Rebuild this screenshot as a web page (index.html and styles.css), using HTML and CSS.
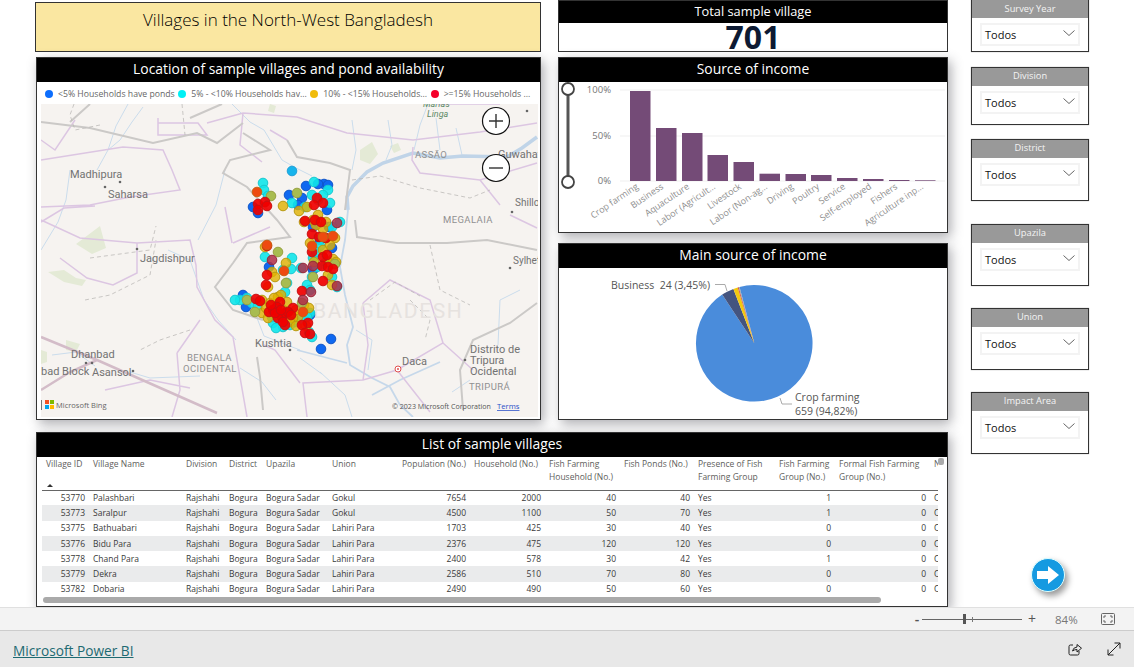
FILE: index.html
```html
<!DOCTYPE html>
<html lang="en">
<head>
<meta charset="utf-8">
<title>Villages in the North-West Bangladesh</title>
<link rel="stylesheet" href="styles.css">
</head>
<body>
<div class="page">
  <main class="canvas">
    <div class="report">
      <div class="top">
        <section class="col-left">
          <div class="title-card">Villages in the North-West Bangladesh</div>
          <div class="card map-card">
            <h2 class="card-head">Location of sample villages and pond availability</h2>
            <div class="legend">
              <span class="leg"><i class="dot dot-blue"></i>&lt;5% Households have ponds</span>
              <span class="leg"><i class="dot dot-cyan"></i>5% - &lt;10% Households hav...</span>
              <span class="leg"><i class="dot dot-yellow"></i>10% - &lt;15% Households...</span>
              <span class="leg"><i class="dot dot-red"></i>&gt;=15% Households ...</span>
            </div>
            <svg class="map" viewBox="41 104 497 313" width="497" height="313">
              <rect x="41" y="104" width="497" height="313" fill="#f6f3f0"/>
              <g class="terrain">
                <path class="green" d="M270 104l6 2-2 7-6-2zM360 150l12-8 6 12-8 10-10-4zM390 146l8-3 3 7-7 3zM76 244l24-18 6 22-14 6zM48 272l16-2 12 8 10 2-4 6-18-4zM41 350l6 2v10l-6 2zM66 340l14 4-4 8-10-2z"/>
                <path class="river" d="M97 170L108 150L120 140L132 122L143 107M128 104L116 126L108 150M232 104L250 122L264 130L282 160L296 168L312 176M352 120L356 150L352 170M388 120L392 145L386 160M414 150L420 125L428 104M70 170L66 200L58 222L41 250M168 250L190 260L204 300L218 320L236 340M225 170L216 205L198 240M52 355L76 352L95 366M130 372L150 378L200 376M250 300L264 336L300 350M240 368L262 382L276 400M436 118L440 150M456 128L462 155M356 330L372 340L368 370M320 372L345 395L352 417M300 358L322 374M452 392L470 380M498 345L500 300L520 290"/>
                <path class="river-wide" d="M348 210L347 197L353 186L367 172L383 163L413 153L440 158L463 156L507 157L522 148L537 137"/>
                <path class="river-mid" d="M348 210L345 240L340 267L345 295L353 327L347 345L350 365L372 378L390 387L400 405L413 417M297 350L320 356L347 363M372 395L400 380L440 362"/>
                <path class="road" d="M41 160L123 147L163 150L172 170L180 190L130 197L90 205L41 207M158 118V135H207L198 123H158M207 123L243 113L297 117L347 133L413 140L480 132L537 123M413 147L412 160L420 173L480 180L537 163M41 220L80 238L137 243L190 240L196 265L197 287L215 320L233 337L247 417M137 243V273L113 285L87 278L60 258M233 243L270 227M363 303L390 280L430 300L443 343L397 370L363 380L303 383L307 417M177 353L200 320M177 353L180 390L172 417M75 120L55 150L41 140M243 113L240 145L262 162M437 104L500 104M225 207L232 243M105 390L150 380L190 388M443 343L473 370M397 370L430 412M287 140L270 130M41 222L64 208L95 206M300 383L275 350L264 345M480 180L500 205M537 228L510 215M363 303L368 345L363 380"/>
                <path class="road-main" d="M41 337L97 360L217 413M41 390L70 372L97 360"/>
                <path class="border" d="M41 122L90 128L153 143L197 133L217 143L243 123M243 133L270 150L230 160L223 173L247 187L277 220L290 237L247 243L233 263L215 287L233 310L263 320M287 140L297 157L330 163L350 170L345 210M355 220L357 237L397 243L447 243L487 240L537 250M257 357L260 377L263 410M537 303L510 323L473 340L460 370L463 410M90 104L70 122M222 104L190 118"/>
                <path class="dashed" d="M74 104L70 115L75 130L100 125M182 104L185 135M90 258L150 250L156 226M85 300L110 295L150 275L156 240M190 330L160 340L140 350M370 300L395 282L420 296M410 300L430 320L425 340M430 245L440 290L470 305M352 180L380 176L420 188L470 198L490 190"/>
              </g>
              <g class="labels">
                <text class="lbl-green" x="423" y="107">Marias</text>
                <text class="lbl-green" x="427" y="117">Linga</text>
                <text class="lbl-cap" x="415" y="158">ASSÃO</text>
                <text x="498" y="158">Guwahati</text>
                <text class="lbl-sm" x="515" y="206">Shillong</text>
                <text class="lbl-cap" x="443" y="223">MEGALAIA</text>
                <text class="lbl-sm" x="513" y="264">Sylhet</text>
                <text x="70" y="178">Madhipura</text>
                <text x="108" y="198">Saharsa</text>
                <text x="140" y="262">Jagdishpur</text>
                <text class="lbl-bd" x="313" y="318">BANGLADESH</text>
                <text x="255" y="347">Kushtia</text>
                <text x="71" y="358">Dhanbad</text>
                <text class="lbl-cap" x="187" y="361">BENGALA</text>
                <text class="lbl-cap" x="183" y="372">OCIDENTAL</text>
                <text x="41" y="375">bad Block</text>
                <text x="92" y="376">Asansol</text>
                <text x="402" y="365">Daca</text>
                <text x="470" y="353">Distrito de</text>
                <text x="470" y="364">Tripura</text>
                <text x="470" y="375">Ocidental</text>
                <text class="lbl-cap" x="469" y="390">TRIPURÁ</text>
              </g>
              <g class="towns">
                <circle cx="105" cy="187" r="1.3"/><circle cx="120" cy="182" r="1.3"/><circle cx="137" cy="249" r="1.3"/>
                <circle cx="510" cy="268" r="1.3"/><circle cx="290" cy="350" r="1.3"/><circle cx="86" cy="363" r="1.3"/>
                <circle cx="92" cy="363" r="1.3"/><circle cx="133" cy="371" r="1.3"/><circle cx="465" cy="360" r="1.3"/>
                <circle cx="527" cy="111" r="1.3"/><circle cx="512" cy="212" r="1.3"/>
              </g>
              <circle class="capital" cx="398" cy="369" r="3"/><circle class="capital-in" cx="398" cy="369" r="1"/>
              <g class="dots dots-blue">
                <circle cx="258" cy="213"/><circle cx="253" cy="207"/><circle cx="306" cy="186"/><circle cx="324" cy="184"/><circle cx="328" cy="185"/><circle cx="289" cy="195"/><circle cx="302" cy="198"/><circle cx="327" cy="210"/><circle cx="332" cy="248"/><circle cx="269" cy="267"/><circle cx="243" cy="295"/><circle cx="246" cy="307"/><circle cx="310" cy="315"/><circle cx="331" cy="339"/><circle cx="321" cy="349"/><circle cx="313" cy="270"/><circle cx="329" cy="227"/><circle cx="313" cy="227"/><circle cx="320" cy="240"/><circle cx="298" cy="205"/><circle cx="318" cy="184"/>
              </g>
              <g class="dots dots-sky"><circle cx="292" cy="171"/></g>
              <g class="dots dots-cyan">
                <circle cx="263" cy="183"/><circle cx="264" cy="190"/><circle cx="314" cy="182"/><circle cx="328" cy="190"/><circle cx="323" cy="195"/><circle cx="312" cy="195"/><circle cx="292" cy="203"/><circle cx="305" cy="207"/><circle cx="330" cy="203"/><circle cx="340" cy="222"/><circle cx="313" cy="258"/><circle cx="265" cy="257"/><circle cx="292" cy="258"/><circle cx="291" cy="269"/><circle cx="301" cy="268"/><circle cx="283" cy="270"/><circle cx="285" cy="292"/><circle cx="287" cy="283"/><circle cx="307" cy="285"/><circle cx="310" cy="290"/><circle cx="240" cy="300"/><circle cx="247" cy="298"/><circle cx="273" cy="323"/><circle cx="272" cy="317"/><circle cx="283" cy="327"/><circle cx="312" cy="337"/><circle cx="310" cy="313"/><circle cx="307" cy="317"/><circle cx="332" cy="277"/><circle cx="337" cy="287"/><circle cx="312" cy="277"/><circle cx="317" cy="267"/><circle cx="268" cy="196"/><circle cx="318" cy="200"/><circle cx="300" cy="320"/><circle cx="235" cy="300"/><circle cx="252" cy="303"/><circle cx="258" cy="306"/><circle cx="320" cy="246"/><circle cx="316" cy="252"/><circle cx="326" cy="262"/><circle cx="332" cy="227"/><circle cx="295" cy="322"/><circle cx="309" cy="332"/><circle cx="276" cy="328"/><circle cx="290" cy="325"/>
              </g>
              <g class="dots dots-yellow">
                <circle cx="283" cy="206"/><circle cx="299" cy="211"/><circle cx="307" cy="207"/><circle cx="304" cy="222"/><circle cx="323" cy="229"/><circle cx="335" cy="238"/><circle cx="310" cy="243"/><circle cx="323" cy="250"/><circle cx="333" cy="259"/><circle cx="265" cy="247"/><circle cx="286" cy="263"/><circle cx="272" cy="272"/><circle cx="275" cy="277"/><circle cx="268" cy="287"/><circle cx="332" cy="285"/><circle cx="262" cy="313"/><circle cx="278" cy="297"/><circle cx="270" cy="303"/><circle cx="287" cy="302"/><circle cx="298" cy="317"/><circle cx="293" cy="318"/><circle cx="316" cy="225"/><circle cx="328" cy="262"/><circle cx="336" cy="262"/><circle cx="276" cy="315"/><circle cx="306" cy="326"/><circle cx="283" cy="310"/><circle cx="326" cy="222"/><circle cx="318" cy="215"/><circle cx="330" cy="245"/><circle cx="314" cy="262"/><circle cx="328" cy="275"/><circle cx="268" cy="318"/><circle cx="290" cy="322"/><circle cx="296" cy="310"/><circle cx="304" cy="305"/><circle cx="309" cy="308"/><circle cx="296" cy="326"/><circle cx="313" cy="220"/><circle cx="262" cy="300"/><circle cx="281" cy="295"/><circle cx="274" cy="298"/><circle cx="266" cy="308"/>
              </g>
              <g class="dots dots-olive">
                <circle cx="271" cy="196"/><circle cx="297" cy="193"/><circle cx="278" cy="252"/><circle cx="286" cy="283"/><circle cx="255" cy="312"/><circle cx="302" cy="303"/><circle cx="313" cy="277"/><circle cx="247" cy="300"/><circle cx="335" cy="264"/>
              </g>
              <g class="dots dots-red">
                <circle cx="258" cy="204"/><circle cx="265" cy="202"/><circle cx="267" cy="206"/><circle cx="258" cy="210"/><circle cx="317" cy="198"/><circle cx="314" cy="205"/><circle cx="323" cy="203"/><circle cx="305" cy="221"/><circle cx="315" cy="220"/><circle cx="321" cy="222"/><circle cx="312" cy="234"/><circle cx="319" cy="237"/><circle cx="326" cy="238"/><circle cx="312" cy="252"/><circle cx="323" cy="257"/><circle cx="327" cy="255"/><circle cx="267" cy="246"/><circle cx="322" cy="266"/><circle cx="328" cy="267"/><circle cx="333" cy="269"/><circle cx="267" cy="275"/><circle cx="266" cy="285"/><circle cx="323" cy="281"/><circle cx="302" cy="291"/><circle cx="256" cy="299"/><circle cx="260" cy="301"/><circle cx="293" cy="308"/><circle cx="280" cy="302"/><circle cx="277" cy="307"/><circle cx="273" cy="310"/><circle cx="269" cy="312"/><circle cx="282" cy="317"/><circle cx="285" cy="313"/><circle cx="278" cy="318"/><circle cx="285" cy="325"/><circle cx="308" cy="323"/><circle cx="302" cy="325"/><circle cx="305" cy="333"/><circle cx="310" cy="334"/><circle cx="288" cy="312"/><circle cx="275" cy="313"/><circle cx="291" cy="315"/><circle cx="281" cy="310"/><circle cx="271" cy="305"/><circle cx="283" cy="322"/>
              </g>
              <g class="dots dots-orange">
                <circle cx="333" cy="236"/><circle cx="312" cy="246"/><circle cx="284" cy="271"/><circle cx="303" cy="312"/><circle cx="267" cy="245"/><circle cx="323" cy="237"/><circle cx="257" cy="192"/>
              </g>
              <g class="dots dots-crimson">
                <circle cx="337" cy="223"/><circle cx="313" cy="266"/><circle cx="303" cy="268"/><circle cx="337" cy="286"/><circle cx="311" cy="292"/><circle cx="303" cy="300"/><circle cx="272" cy="260"/>
              </g>
              <g class="bing">
                <rect x="41" y="400" width="1" height="10" fill="#777"/>
                <rect x="45" y="400" width="4" height="4" fill="#f25022"/><rect x="50" y="400" width="4" height="4" fill="#7fba00"/>
                <rect x="45" y="405" width="4" height="4" fill="#00a4ef"/><rect x="50" y="405" width="4" height="4" fill="#ffb900"/>
                <text class="bing-text" x="56" y="407.5">Microsoft Bing</text>
                <text class="copy" x="392" y="409">© 2023 Microsoft Corporation</text>
                <text class="terms" x="497" y="409">Terms</text>
              </g>
              <g class="zoom-btn">
                <circle cx="496" cy="121" r="13.5"/><path d="M489 121H503M496 114V128"/>
                <circle cx="496" cy="168" r="13.5"/><path d="M489 168H503"/>
              </g>
            </svg>
          </div>
        </section>
        <section class="col-mid">
          <div class="card kpi-card">
            <h2 class="card-head kpi-head">Total sample village</h2>
            <div class="kpi-value">701</div>
          </div>
          <div class="card income-card">
            <h2 class="card-head">Source of income</h2>
            <svg class="bars" viewBox="559 81 388 151" width="388" height="151">
              <path class="grid" d="M620 89H945M620 135H945M620 180H945"/>
              <path class="slider" d="M568 94V175"/>
              <circle class="slider-knob" cx="568" cy="88" r="6"/><circle class="slider-knob" cx="568" cy="181" r="6"/>
              <text class="axis" x="611" y="92">100%</text><text class="axis" x="611" y="138">50%</text><text class="axis" x="611" y="183">0%</text>
              <g class="bar">
                <rect x="630" y="90" width="20.5" height="90"/><rect x="656" y="127" width="20.5" height="53"/><rect x="682" y="132" width="20.5" height="48"/><rect x="707.500" y="154" width="20.500" height="26"/><rect x="733.500" y="161" width="20.500" height="19"/><rect x="759.500" y="172.700" width="20.500" height="7.300"/><rect x="785.500" y="173" width="20.500" height="7"/><rect x="811" y="174" width="20.500" height="6"/><rect x="837" y="177" width="20.500" height="3"/><rect x="863" y="178" width="20.500" height="2"/><rect x="889" y="179" width="20.500" height="1"/><rect x="915" y="179.300" width="20.500" height=".7"/>
              </g>
              <g class="xlabels">
                <text transform="translate(639 187) rotate(-34)">Crop farming</text>
                <text transform="translate(664 187) rotate(-34)">Business</text>
                <text transform="translate(690 187) rotate(-34)">Aquaculture</text>
                <text transform="translate(716 187) rotate(-34)">Labor (Agricult...</text>
                <text transform="translate(742 187) rotate(-34)">Livestock</text>
                <text transform="translate(768 187) rotate(-34)">Labor (Non-ag...</text>
                <text transform="translate(794 187) rotate(-34)">Driving</text>
                <text transform="translate(820 187) rotate(-34)">Poultry</text>
                <text transform="translate(846 187) rotate(-34)">Service</text>
                <text transform="translate(872 187) rotate(-34)">Self-employed</text>
                <text transform="translate(898 187) rotate(-34)">Fishers</text>
                <text transform="translate(924 187) rotate(-34)">Agriculture inp...</text>
              </g>
            </svg>
          </div>
          <div class="card pie-card">
            <h2 class="card-head">Main source of income</h2>
            <svg class="pie" viewBox="559 267 388 152" width="388" height="152">
              <path fill="#4a8cdb" d="M754.300 342.300L739.500 285.900A58.300 58.300 0 1 1 722.200 293.600Z"/>
              <path fill="#44547f" d="M754.300 342.300L722.200 293.600A58.300 58.300 0 0 1 733.400 287.900Z"/>
              <path fill="#f2c80f" d="M754.300 342.300L733.400 287.900A58.300 58.300 0 0 1 737.700 286.400Z"/>
              <path fill="#d9564f" d="M754.300 342.300L737.700 286.400A58.300 58.300 0 0 1 738.700 286.100Z"/>
              <path fill="#8aa0a8" d="M754.300 342.300L738.700 286.100A58.300 58.300 0 0 1 739.500 285.900Z"/>
              <path class="leader" d="M715 283.500H725L727 290M780 397L782 403H792"/>
              <text class="pie-label" x="611" y="288">Business  24 (3,45%)</text>
              <text class="pie-label" x="795" y="400">Crop farming</text>
              <text class="pie-label" x="795" y="414">659 (94,82%)</text>
            </svg>
          </div>
        </section>
      </div>
      <div class="card table-card">
        <h2 class="card-head">List of sample villages</h2>
        <div class="table-wrap">
          <table class="vtable">
            <colgroup>
              <col class="c1"><col class="c2"><col class="c3"><col class="c4"><col class="c5"><col class="c6"><col class="c7"><col class="c8"><col class="c9"><col class="c10"><col class="c11"><col class="c12"><col class="c13"><col class="c14">
            </colgroup>
            <thead>
              <tr>
                <th class="sorted">Village ID<i class="sort-arrow"></i></th><th>Village Name</th><th>Division</th><th>District</th><th>Upazila</th><th>Union</th><th>Population (No.)</th><th>Household (No.)</th><th>Fish Farming Household (No.)</th><th>Fish Ponds (No.)</th><th>Presence of Fish Farming Group</th><th>Fish Farming Group (No.)</th><th>Formal Fish Farming Group (No.)</th><th>No Im</th>
              </tr>
            </thead>
            <tbody>
              <tr><td class="n">53770</td><td>Palashbari</td><td>Rajshahi</td><td>Bogura</td><td>Bogura Sadar</td><td>Gokul</td><td class="n">7654</td><td class="n">2000</td><td class="n">40</td><td class="n">40</td><td>Yes</td><td class="n">1</td><td class="n">0</td><td>C</td></tr>
              <tr><td class="n">53773</td><td>Saralpur</td><td>Rajshahi</td><td>Bogura</td><td>Bogura Sadar</td><td>Gokul</td><td class="n">4500</td><td class="n">1100</td><td class="n">50</td><td class="n">70</td><td>Yes</td><td class="n">1</td><td class="n">0</td><td>C</td></tr>
              <tr><td class="n">53775</td><td>Bathuabari</td><td>Rajshahi</td><td>Bogura</td><td>Bogura Sadar</td><td>Lahiri Para</td><td class="n">1703</td><td class="n">425</td><td class="n">30</td><td class="n">40</td><td>Yes</td><td class="n">0</td><td class="n">0</td><td>C</td></tr>
              <tr><td class="n">53776</td><td>Bidu Para</td><td>Rajshahi</td><td>Bogura</td><td>Bogura Sadar</td><td>Lahiri Para</td><td class="n">2376</td><td class="n">475</td><td class="n">120</td><td class="n">120</td><td>Yes</td><td class="n">0</td><td class="n">0</td><td>C</td></tr>
              <tr><td class="n">53778</td><td>Chand Para</td><td>Rajshahi</td><td>Bogura</td><td>Bogura Sadar</td><td>Lahiri Para</td><td class="n">2400</td><td class="n">578</td><td class="n">30</td><td class="n">42</td><td>Yes</td><td class="n">1</td><td class="n">0</td><td>C</td></tr>
              <tr><td class="n">53779</td><td>Dekra</td><td>Rajshahi</td><td>Bogura</td><td>Bogura Sadar</td><td>Lahiri Para</td><td class="n">2586</td><td class="n">510</td><td class="n">70</td><td class="n">80</td><td>Yes</td><td class="n">0</td><td class="n">0</td><td>C</td></tr>
              <tr><td class="n">53782</td><td>Dobaria</td><td>Rajshahi</td><td>Bogura</td><td>Bogura Sadar</td><td>Lahiri Para</td><td class="n">2490</td><td class="n">490</td><td class="n">50</td><td class="n">60</td><td>Yes</td><td class="n">0</td><td class="n">0</td><td>C</td></tr>
            </tbody>
          </table>
          <div class="vscroll"></div>
          <div class="hscroll"></div>
        </div>
      </div>
    </div>
    <aside class="slicers">
      <div class="slicer s-year"><h3>Survey Year</h3><div class="drop">Todos<svg class="chev" viewBox="0 0 12 6" width="12" height="6"><path d="M.5 .5L6 5.500L11.500 .5"/></svg></div></div>
      <div class="slicer s-div"><h3>Division</h3><div class="drop">Todos<svg class="chev" viewBox="0 0 12 6" width="12" height="6"><path d="M.5 .5L6 5.500L11.500 .5"/></svg></div></div>
      <div class="slicer s-std"><h3>District</h3><div class="drop">Todos<svg class="chev" viewBox="0 0 12 6" width="12" height="6"><path d="M.5 .5L6 5.500L11.500 .5"/></svg></div></div>
      <div class="slicer s-std s-up"><h3>Upazila</h3><div class="drop">Todos<svg class="chev" viewBox="0 0 12 6" width="12" height="6"><path d="M.5 .5L6 5.500L11.500 .5"/></svg></div></div>
      <div class="slicer s-std"><h3>Union</h3><div class="drop">Todos<svg class="chev" viewBox="0 0 12 6" width="12" height="6"><path d="M.5 .5L6 5.500L11.500 .5"/></svg></div></div>
      <div class="slicer s-std"><h3>Impact Area</h3><div class="drop">Todos<svg class="chev" viewBox="0 0 12 6" width="12" height="6"><path d="M.5 .5L6 5.500L11.500 .5"/></svg></div></div>
    </aside>
    <button class="next-btn" aria-label="Next page">
      <svg viewBox="0 0 24 20" width="24" height="20"><path fill="#fff" d="M1 6H12V1L23 10L12 19V14H1Z"/></svg>
    </button>
  </main>
  <div class="zoombar">
    <span class="z-sign">-</span>
    <span class="z-track"><i class="z-thumb"></i><i class="z-tick"></i></span>
    <span class="z-sign z-plus">+</span>
    <span class="z-val">84%</span>
    <svg class="z-fit" viewBox="0 0 14 12" width="14" height="12"><rect x=".5" y=".5" width="13" height="11" rx="1"/><path d="M3 5V3H5M9 3H11V5M11 7V9H9M5 9H3V7"/></svg>
  </div>
  <footer class="footer">
    <a class="pbi-link" href="#">Microsoft Power BI</a>
    <div class="foot-icons">
      <svg viewBox="0 0 14 14" width="14" height="14"><path d="M5 3H2.500Q1 3 1 4.500V11.500Q1 13 2.500 13H9.500Q11 13 11 11.500V9M4.500 9Q5 5.500 9 5V2.500L13.500 6.200L9 10V7.500Q6.500 7.500 4.500 9Z"/></svg>
      <svg viewBox="0 0 14 14" width="14" height="14"><path d="M1 13L13 1M7.500 1H13V6.500M1 7.500V13H6.500"/></svg>
    </div>
  </footer>
</div>
</body>
</html>
```

FILE: styles.css
```css
* { box-sizing: border-box; }
html, body { margin: 0; padding: 0; }
body { font-family: "Open Sans", "Noto Sans", sans-serif; background: #fff; color: #252423; overflow: hidden; }
.page { width: 1134px; height: 667px; display: flex; flex-direction: column; }
.canvas { position: relative; height: 607px; display: flex; padding-left: 36px; overflow: hidden; flex: none; }
.report { width: 912px; flex: none; }
.top { display: flex; gap: 17px; height: 432px; }
.col-left { width: 505px; flex: none; display: flex; flex-direction: column; }
.col-mid { width: 390px; flex: none; display: flex; flex-direction: column; }

.card { background: #fff; border: 1px solid #333; display: flex; flex-direction: column; overflow: hidden; }
.map-card, .income-card, .pie-card, .table-card { box-shadow: 3px 4px 11px rgba(60, 60, 70, .42); }
.card-head { margin: 0; height: 24px; flex: none; background: #000; color: #fff; font-size: 13.900px; font-weight: 400; line-height: 21px; text-align: center; }

.title-card { margin: 2px 0 0 -1px; width: 506px; height: 50px; background: #fae7a1; border: 1px solid #333; font-size: 17px; font-weight: 300; color: #000; text-align: center; line-height: 33px; }
.map-card { margin-top: 5px; height: 363px; }
.legend { height: 22px; flex: none; display: flex; align-items: center; padding: 2px 0 0 8px; gap: 3.500px; font-size: 8.700px; color: #666; white-space: nowrap; }
.leg { display: flex; align-items: center; }
.dot { width: 8px; height: 8px; border-radius: 50%; margin-right: 5px; flex: none; }
.dot-blue { background: #0d6efd; }
.dot-cyan { background: #00f0f5; }
.dot-yellow { background: #f0bc0c; }
.dot-red { background: #f5002a; }
.map { display: block; margin-left: 4px; flex: none; }
.terrain { filter: blur(.35px); fill: none; }
.terrain .green { fill: #e4ead6; stroke: none; }
.river { stroke: #cadcec; stroke-width: 1; }
.river-wide { stroke: #c0d4e8; stroke-width: 3.500; }
.river-mid { stroke: #c6d8ea; stroke-width: 1.800; }
.road { stroke: #dcc6e2; stroke-width: 1.500; }
.road-main { stroke: #d3bcc8; stroke-width: 2.500; }
.border { stroke: #cbc9c7; stroke-width: 2; }
.dashed { stroke: #bdbab8; stroke-width: .8; stroke-dasharray: 4 3; }
.labels text { font-family: Roboto, sans-serif; font-size: 11px; fill: #727272; }
.labels .lbl-sm { font-size: 10px; }
.labels .lbl-cap { font-size: 9.500px; fill: #909090; letter-spacing: .4px; }
.labels .lbl-green { font-size: 9px; font-style: italic; fill: #5f8a68; }
.labels .lbl-bd { font-size: 21px; fill: #e6e2df; letter-spacing: 1.600px; }
.towns circle { fill: #666; }
.capital { fill: #fff; stroke: #e05050; stroke-width: 1; }
.capital-in { fill: #e05050; }
.dots circle { r: 4.800px; stroke-width: 1; }
.dots-blue { fill: #0f68f0; stroke: #0f55c8; }
.dots-sky { fill: #18b4ec; stroke: #20a0d8; }
.dots-cyan { fill: #10e6ea; fill-opacity: .9; stroke: #18c8d0; }
.dots-yellow { fill: #e0b000; fill-opacity: .8; stroke: #b89a10; }
.dots-olive { fill: #a8bc50; stroke: #98a040; }
.dots-red { fill: #f00000; fill-opacity: .92; stroke: #c81010; }
.dots-orange { fill: #ee4a10; stroke: #c86010; }
.dots-crimson { fill: #b02c48; fill-opacity: .85; stroke: #982838; }
.bing-text { font-family: "Open Sans", sans-serif; font-size: 7.500px; fill: #666; }
.copy { font-family: "Open Sans", sans-serif; font-size: 7.100px; fill: #555; }
.terms { font-family: "Open Sans", sans-serif; font-size: 7.700px; fill: #2a50c8; text-decoration: underline; }
.zoom-btn circle { fill: #fff; stroke: #111; stroke-width: 1.200; }
.zoom-btn path { fill: none; stroke: #333; stroke-width: 1.400; }

.kpi-card { height: 52px; }
.kpi-head { height: 22px; font-size: 12.800px; line-height: 20px; }
.kpi-value { flex: 1; text-align: center; font-size: 32px; font-weight: 700; color: #0d1a33; line-height: 27px; }
.income-card { margin-top: 5px; height: 176px; }
.pie-card { margin-top: 10px; height: 177px; }
.bars, .pie { display: block; flex: none; }
.grid { stroke: #efefef; stroke-width: 1; fill: none; }
.slider { stroke: #555; stroke-width: 3; fill: none; }
.slider-knob { fill: #fff; stroke: #444; stroke-width: 1.800px; }
.axis { font-size: 9.500px; fill: #777; text-anchor: end; }
.bar rect { fill: #744b77; }
.xlabels text { font-size: 9px; fill: #8f8f8f; text-anchor: end; }
.leader { fill: none; stroke: #aaa; stroke-width: 1; }
.pie-label { font-size: 10.500px; fill: #555; white-space: pre; }

.table-card { height: 175px; }
.table-wrap { position: relative; flex: 1; overflow: hidden; }
.vtable { table-layout: fixed; border-collapse: collapse; width: 934px; margin-left: 5px; font-size: 8.500px; color: #3a3a3a; }
.c1 { width: 47px; } .c2 { width: 93px; } .c3 { width: 43px; } .c4 { width: 37px; } .c5 { width: 66px; } .c6 { width: 70px; } .c7 { width: 72px; } .c8 { width: 75px; } .c9 { width: 75px; } .c10 { width: 74px; } .c11 { width: 81px; } .c12 { width: 60px; } .c13 { width: 95px; } .c14 { width: 46px; }
.vtable th { height: 33px; vertical-align: top; text-align: left; font-weight: 400; color: #605e5c; padding: 0 4px; line-height: 13px; border-bottom: 1px solid #666; position: relative; }
.sort-arrow { position: absolute; left: 5px; bottom: 3px; border: 3px solid transparent; border-top: 0; border-bottom: 3px solid #333; }
.vtable td { height: 15.300px; padding: 0 4px; line-height: 14px; white-space: nowrap; overflow: hidden; }
.vtable tbody tr:nth-child(even) { background: #eaebec; }
.vtable .n { text-align: right; }
.vscroll { position: absolute; left: 901px; top: 1px; width: 6px; height: 7px; border-radius: 2px; background: #aaa; z-index: 1; }
.table-wrap::after { content: ""; position: absolute; left: 901px; right: 0; top: 0; bottom: 0; background: #fff; }
.hscroll { position: absolute; left: 6px; top: 140px; width: 838px; height: 6px; border-radius: 3px; background: #aaa; z-index: 1; }

.slicers { margin-left: 23px; width: 118px; flex: none; display: flex; flex-direction: column; gap: 22px; margin-top: -1px; }
.slicer { background: #fff; border: 1px solid #333; height: 62px; flex: none; box-shadow: 0 0 1px #999; }
.slicer h3 { margin: 0; height: 18px; background: #999; color: #f4f4f4; font-size: 9.300px; font-weight: 500; line-height: 15px; text-align: center; }
.s-year h3 { line-height: 17px; }
.drop { margin: 5px 8px 0; height: 23px; width: 100px; border: 2px solid #f3f3f3; display: flex; align-items: center; justify-content: space-between; padding: 0 3px; font-size: 11px; color: #111; }
.chev { fill: none; stroke: #666; stroke-width: 1; margin-top: -3px; }
.s-year { height: 53px; margin-bottom: -7px; }
.s-div { height: 58px; margin-bottom: -8px; }
.s-up { margin-top: 1px; }

.next-btn { position: absolute; left: 1031px; top: 558px; width: 34px; height: 34px; padding: 0; border-radius: 50%; border: 1px solid #dff; background: #159ae1; box-shadow: 3px 4px 6px rgba(0, 0, 0, .4); display: flex; align-items: center; justify-content: center; }

.zoombar { height: 24px; flex: none; background: #f3f3f3; border-top: 1px solid #e0e0e0; border-bottom: 1px solid #ccc; display: flex; align-items: center; padding-left: 912px; color: #555; }
.z-sign { width: 10px; font-size: 14px; font-weight: 600; text-align: center; line-height: 1; }
.z-track { position: relative; width: 100px; height: 1px; background: #666; }
.z-thumb { position: absolute; left: 41px; top: -5px; width: 3px; height: 10px; background: #555; }
.z-tick { position: absolute; left: 50px; top: -2px; width: 1px; height: 5px; background: #777; }
.z-plus { margin-left: 5px; font-weight: 400; }
.z-val { margin-left: 18px; font-size: 11.500px; color: #777; width: 24px; }
.z-fit { margin-left: 22px; fill: none; stroke: #666; stroke-width: 1; }

.footer { flex: 1; background: #e8e8e8; display: flex; align-items: center; justify-content: space-between; padding: 0 13px; }
.pbi-link { color: #1d6a72; font-size: 13.700px; position: relative; top: 1px; }
.foot-icons { display: flex; gap: 25px; }
.foot-icons svg { fill: none; stroke: #222; stroke-width: 1; display: block; }
```
